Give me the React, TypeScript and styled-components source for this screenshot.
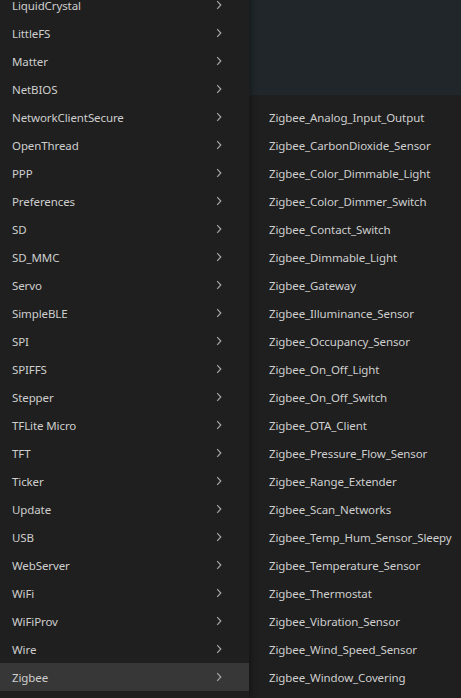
import React from "react";
import styled, { createGlobalStyle } from "styled-components";

const libraries = [
  "LiquidCrystal",
  "LittleFS",
  "Matter",
  "NetBIOS",
  "NetworkClientSecure",
  "OpenThread",
  "PPP",
  "Preferences",
  "SD",
  "SD_MMC",
  "Servo",
  "SimpleBLE",
  "SPI",
  "SPIFFS",
  "Stepper",
  "TFLite Micro",
  "TFT",
  "Ticker",
  "Update",
  "USB",
  "WebServer",
  "WiFi",
  "WiFiProv",
  "Wire",
  "Zigbee",
];

const examples = [
  "Zigbee_Analog_Input_Output",
  "Zigbee_CarbonDioxide_Sensor",
  "Zigbee_Color_Dimmable_Light",
  "Zigbee_Color_Dimmer_Switch",
  "Zigbee_Contact_Switch",
  "Zigbee_Dimmable_Light",
  "Zigbee_Gateway",
  "Zigbee_Illuminance_Sensor",
  "Zigbee_Occupancy_Sensor",
  "Zigbee_On_Off_Light",
  "Zigbee_On_Off_Switch",
  "Zigbee_OTA_Client",
  "Zigbee_Pressure_Flow_Sensor",
  "Zigbee_Range_Extender",
  "Zigbee_Scan_Networks",
  "Zigbee_Temp_Hum_Sensor_Sleepy",
  "Zigbee_Temperature_Sensor",
  "Zigbee_Thermostat",
  "Zigbee_Vibration_Sensor",
  "Zigbee_Wind_Speed_Sensor",
  "Zigbee_Window_Covering",
];

const GlobalStyle = createGlobalStyle`
  html, body {
    margin: 0;
    padding: 0;
    background: #20262a;
    overflow: hidden;
  }
  body {
    font-family: "Noto Sans", "Open Sans", sans-serif;
  }
`;

const Chevron = () => (
  <svg width="6" height="10" viewBox="0 0 6 10">
    <path d="M1.2 1.2 L4.8 5 L1.2 8.8" fill="none" stroke="#a8a8a8" strokeWidth="1.2" />
  </svg>
);

const App: React.FC = () => {
  return (
    <Screen>
      <GlobalStyle />
      <Menu>
        {libraries.map((name) => (
          <MenuRow key={name} active={name === "Zigbee"}>
            <Label>{name}</Label>
            <ChevronSlot>
              <Chevron />
            </ChevronSlot>
          </MenuRow>
        ))}
      </Menu>
      <Side>
        <EditorArea />
        <SubMenu>
          {examples.map((name) => (
            <SubRow key={name}>
              <Label>{name}</Label>
            </SubRow>
          ))}
        </SubMenu>
      </Side>
    </Screen>
  );
};

const Screen = styled.div`
  display: flex;
  width: 461px;
  height: 698px;
  overflow: hidden;
  background: #20262a;
`;

const Menu = styled.div`
  width: 249px;
  flex-shrink: 0;
  margin-top: -9px;
  background: #1f1f1f;
  display: flex;
  flex-direction: column;
  position: relative;
  z-index: 2;
  box-shadow: 2px 0 6px rgba(0, 0, 0, 0.35);
`;

const MenuRow = styled.div<{ active?: boolean }>`
  height: 28px;
  display: flex;
  align-items: center;
  padding: 0 27px 0 12px;
  background: ${(p) => (p.active ? "#373737" : "transparent")};
`;

const Label = styled.span`
  flex: 1;
  color: #cecece;
  font-size: 11.5px;
  letter-spacing: -0.1px;
  white-space: nowrap;
`;

const ChevronSlot = styled.span`
  display: flex;
  align-items: center;
`;

const Side = styled.div`
  flex: 1;
  display: flex;
  flex-direction: column;
  min-width: 0;
`;

const EditorArea = styled.div`
  height: 95px;
  flex-shrink: 0;
  background: #20262a;
`;

const SubMenu = styled.div`
  flex: 1;
  background: #1f1f1f;
  border-top-left-radius: 5px;
  padding: 8px 0 0 20px;
  display: flex;
  flex-direction: column;
`;

const SubRow = styled.div`
  height: 28px;
  display: flex;
  align-items: center;
`;

export default App;
